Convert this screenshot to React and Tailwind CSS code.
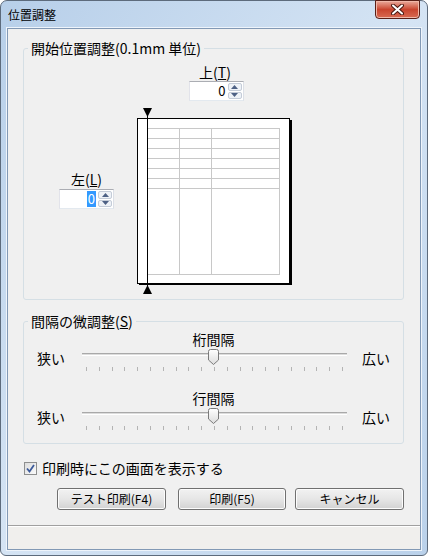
import React from "react";

const font = "font-['Noto_Sans_CJK_JP',sans-serif]";

function SpinBox({ value, selected }) {
  return (
    <div className="flex h-[20px] w-[55px] border border-[#abadb3] border-b-[#e3e9ef] border-l-[#e2e3ea] border-r-[#dbdfe6] bg-white">
      <div className="flex flex-1 items-center justify-end pr-[2px] text-[13px] leading-4 text-black">
        {selected ? (
          <span className="bg-[#3399ff] px-px text-white">{value}</span>
        ) : (
          <span>{value}</span>
        )}
      </div>
      <div className="my-px mr-px flex w-[14px] flex-col gap-px">
        <div className="flex flex-1 items-center justify-center rounded-[2px] border border-[#c4ccd8] bg-[#eef2f7]">
          <svg width="7" height="4" viewBox="0 0 7 4">
            <path d="M0 4 L3.5 0 L7 4 Z" fill="#4d6185" />
          </svg>
        </div>
        <div className="flex flex-1 items-center justify-center rounded-[2px] border border-[#c4ccd8] bg-[#eef2f7]">
          <svg width="7" height="4" viewBox="0 0 7 4">
            <path d="M0 0 L7 0 L3.5 4 Z" fill="#4d6185" />
          </svg>
        </div>
      </div>
    </div>
  );
}

function PaperPreview() {
  const rows = [30, 40, 50, 60, 70, 80];
  return (
    <svg width="156" height="186" viewBox="0 0 156 186">
      {/* shadow + page */}
      <rect x="2" y="12" width="153" height="165" fill="#000" />
      <rect x="0.5" y="10.5" width="152" height="165" fill="#fff" stroke="#000" />
      {/* table grid */}
      <g stroke="#c8c8c8" fill="none">
        <rect x="10.5" y="20.5" width="132" height="146" />
        <line x1="42.5" y1="20" x2="42.5" y2="166" />
        <line x1="74.5" y1="20" x2="74.5" y2="166" />
        {rows.map((y) => (
          <line key={y} x1="10" y1={y + 0.5} x2="142" y2={y + 0.5} />
        ))}
      </g>
      {/* left margin marker */}
      <line x1="10.5" y1="4" x2="10.5" y2="182" stroke="#000" />
      <path d="M6 0 L15 0 L10.5 9 Z" fill="#000" />
      <path d="M6 186 L15 186 L10.5 177 Z" fill="#000" />
    </svg>
  );
}

function Slider({ id }) {
  const ticks = Array.from({ length: 21 }, (_, i) => Math.round(6 + i * 12.8) + 0.5);
  return (
    <svg width="270" height="26" viewBox="0 0 270 26">
      <defs>
        <linearGradient id={id} x1="0" y1="0" x2="0" y2="1">
          <stop offset="0" stopColor="#ffffff" />
          <stop offset="1" stopColor="#dcdcdc" />
        </linearGradient>
      </defs>
      <line x1="2" y1="6.5" x2="267" y2="6.5" stroke="#a9a9a9" />
      <line x1="2" y1="7.5" x2="267" y2="7.5" stroke="#dcdcdc" />
      <line x1="2" y1="8.5" x2="267" y2="8.5" stroke="#ffffff" />
      {ticks.map((x) => (
        <line key={x} x1={x} y1="20" x2={x} y2="24" stroke="#b4b4b4" />
      ))}
      <path
        d="M128.5 4.5 Q128.5 2.5 130.5 2.5 H136.5 Q138.5 2.5 138.5 4.5 V13 L133.5 17.5 L128.5 13 Z"
        fill={`url(#${id})`}
        stroke="#7a7a7a"
      />
    </svg>
  );
}

function SliderRow({ title, id }) {
  return (
    <>
      <div className="h-4 text-center text-[14px] leading-4">{title}</div>
      <div className="flex items-start">
        <span className="ml-[13px] mt-[3px] w-[43px] text-[14px] leading-4">狭い</span>
        <Slider id={id} />
        <span className="ml-[12px] mt-[3px] text-[14px] leading-4">広い</span>
      </div>
    </>
  );
}

function Button({ children, className }) {
  return (
    <button
      className={`h-[22px] rounded-[3px] border border-[#707070] bg-linear-to-b from-[#f2f2f2] via-[#e6e6e6] to-[#d2d2d2] text-[12px] leading-4 text-black shadow-[inset_0_0_0_1px_#fcfcfc] ${className}`}
    >
      {children}
    </button>
  );
}

export default function App() {
  return (
    <div className={`h-[556px] w-[428px] bg-white ${font}`}>
      <div className="flex h-full w-full flex-col rounded-t-[7px] rounded-b-[6px] border border-[#5d6b7c] bg-linear-to-br from-[#b7cfe9] via-[#d5e4f4] to-[#bad1ea]">
        {/* title bar */}
        <div className="flex h-[27px] items-start justify-between">
          <div className="pl-[7px] pt-[6px] text-[12px] leading-4 text-black">位置調整</div>
          <div className="-mt-px mr-[7px] flex h-[19px] w-[45px] items-center justify-center rounded-b-[4px] border border-[#5a1f17] bg-linear-to-b from-[#e9a99b] via-[#c9442e] to-[#d86a52] shadow-[inset_0_0_0_1px_#f0b7a8]">
            <svg width="13" height="11" viewBox="0 0 13 11">
              <path
                d="M2 1.5 L11 9.5 M11 1.5 L2 9.5"
                stroke="#4a1810"
                strokeWidth="4"
                strokeLinecap="round"
              />
              <path d="M2 1.5 L11 9.5 M11 1.5 L2 9.5" stroke="#fff" strokeWidth="2" strokeLinecap="round" />
            </svg>
          </div>
        </div>

        {/* client area */}
        <div className="mx-[6px] mb-[5px] flex flex-1 flex-col border border-[#8299b5] bg-[#f0f0f0] text-black shadow-[0_0_0_1px_#eef4fb]">
          <div className="flex flex-1 flex-col pl-[15px] pr-[16px] pt-[11px]">
            <fieldset className="rounded-[3px] border border-[#d5dfe5] pb-[5px]">
              <legend className="ml-[4px] px-[3px] text-[14px] leading-4">開始位置調整(0.1mm 単位)</legend>
              <div className="flex items-start">
                <div className="ml-[35px] mt-[115px] flex w-[55px] flex-col items-center">
                  <div className="h-4 text-[14px] leading-4">
                    左(<span className="underline">L</span>)
                  </div>
                  <div className="mt-[2px]">
                    <SpinBox value="0" selected />
                  </div>
                </div>
                <div className="ml-[23px] flex w-[156px] flex-col items-center">
                  <div className="mt-[8px] h-4 text-[14px] leading-4">
                    上(<span className="underline">T</span>)
                  </div>
                  <div className="ml-[2px] mt-[1px]">
                    <SpinBox value="0" />
                  </div>
                  <div className="mt-[7px] self-start">
                    <PaperPreview />
                  </div>
                </div>
              </div>
            </fieldset>

            <fieldset className="mt-[13px] rounded-[3px] border border-[#d5dfe5] pb-[11px]">
              <legend className="ml-[4px] px-[3px] text-[14px] leading-4">
                間隔の微調整(<span className="underline">S</span>)
              </legend>
              <div className="mt-[2px] flex flex-col">
                <SliderRow title="桁間隔" id="thumbA" />
                <div className="mt-[17px] flex flex-col">
                  <SliderRow title="行間隔" id="thumbB" />
                </div>
              </div>
            </fieldset>

            <div className="mt-[16px] flex h-4 items-center">
              <div className="ml-px flex h-[13px] w-[13px] items-center justify-center border border-[#8e8f8f] bg-linear-to-br from-[#dcdcdc] to-[#fbfbfb]">
                <svg width="9" height="9" viewBox="0 0 9 9">
                  <path d="M1 4.5 L3.5 7.5 L8 1" stroke="#3c5a9a" strokeWidth="1.8" fill="none" />
                </svg>
              </div>
              <span className="ml-[5px] text-[14px] leading-4">印刷時にこの画面を表示する</span>
            </div>

            <div className="mt-[12px] flex">
              <Button className="ml-[34px] w-[110px]">テスト印刷(F4)</Button>
              <Button className="ml-[12px] w-[109px]">印刷(F5)</Button>
              <Button className="ml-[9px] w-[110px]">キャンセル</Button>
            </div>
          </div>
          <div className="h-[24px] border-t border-[#a0a0a0] bg-[#f0efed] shadow-[inset_0_1px_0_#ffffff]" />
        </div>
      </div>
    </div>
  );
}
